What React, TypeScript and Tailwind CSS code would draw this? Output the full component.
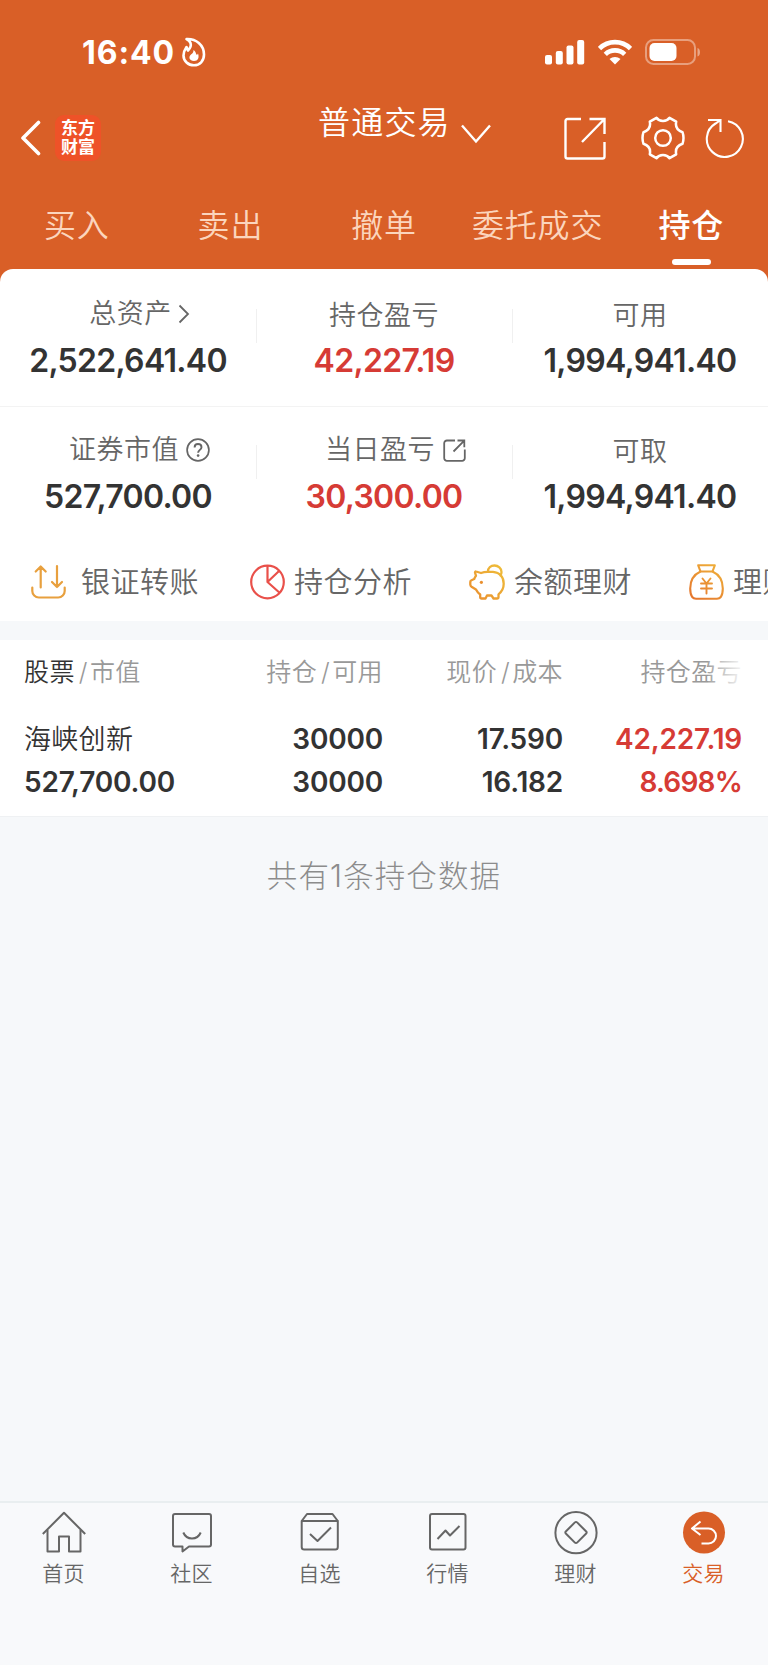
import type { ReactNode } from 'react';
import clsx from 'clsx';

interface Stat {
    label: string;
    value: string;
    icon?: ReactNode;
    red?: boolean;
}

interface QuickAction {
    label: string;
    icon: ReactNode;
    wide?: boolean;
}

const TABS = ['买入', '卖出', '撤单', '委托成交', '持仓'];

const ArrowRight = () => (
    <svg width="12" height="20" viewBox="0 0 12 20" className="ml-[6px]" fill="none" stroke="#666" strokeWidth="1.8">
        <path d="M1.5 1.5 10 10 1.5 18.5" />
    </svg>
);

const Help = () => (
    <svg width="24" height="24" viewBox="0 0 24 24" className="ml-[7px]" fill="none" stroke="#666" strokeWidth="1.7">
        <circle cx="12" cy="12" r="10.9" />
        <path d="M8.6 9.4C8.6 7.2 10 6 12 6s3.5 1.2 3.5 3.2c0 2.6-3.4 2.8-3.4 5.6" strokeWidth="1.9" />
        <circle cx="12.1" cy="17.6" r="1.3" fill="#666" stroke="none" />
    </svg>
);

const Share = () => (
    <svg width="23" height="23" viewBox="0 0 23 23" className="ml-[8px]" fill="none" stroke="#666" strokeWidth="1.8">
        <path d="M12 1.5H4A2.7 2.7 0 0 0 1.2 4.2V19A2.7 2.7 0 0 0 4 21.8H19A2.7 2.7 0 0 0 21.8 19V10.5" />
        <path d="M14.5 1.5H21.3V8.3M21 1.8 10.5 12.5" />
    </svg>
);

const STATS: Stat[][] = [
    [
        { label: '总资产', value: '2,522,641.40', icon: <ArrowRight /> },
        { label: '持仓盈亏', value: '42,227.19', red: true },
        { label: '可用', value: '1,994,941.40' },
    ],
    [
        { label: '证券市值', value: '527,700.00', icon: <Help /> },
        { label: '当日盈亏', value: '30,300.00', icon: <Share />, red: true },
        { label: '可取', value: '1,994,941.40' },
    ],
];

const ACTIONS: QuickAction[] = [
    {
        label: '银证转账',
        wide: true,
        icon: (
            <svg width="35" height="36" viewBox="0 0 35 36" fill="none" stroke="#e8a03e" strokeWidth="2.2" strokeLinecap="round" strokeLinejoin="round">
                <path d="M1.3 23.5V27a6.5 6.5 0 0 0 6.5 6.5H27.2A6.5 6.5 0 0 0 33.7 27V23.5" />
                <path d="M9.7 23.5V2.5M4.7 7.5l5-5 5 5M26 2V23M21 18l5 5 5-5" />
            </svg>
        ),
    },
    {
        label: '持仓分析',
        icon: (
            <svg width="35" height="36" viewBox="0 0 35 36" fill="none" stroke="#e9504a" strokeWidth="2.2" strokeLinejoin="round">
                <circle cx="17.5" cy="18" r="16.3" />
                <path d="M17.5 2V18L29.3 28.5M17.5 18 29.3 6.8" />
            </svg>
        ),
    },
    {
        label: '余额理财',
        icon: (
            <svg width="36" height="36" viewBox="0 0 36 36" fill="none" stroke="url(#pig)" strokeWidth="2.3" strokeLinejoin="round" strokeLinecap="round">
                <defs>
                    <linearGradient id="pig" x1="36" y1="0" x2="0" y2="36" gradientUnits="userSpaceOnUse">
                        <stop stopColor="#efc13a" />
                        <stop offset="1" stopColor="#e98a2e" />
                    </linearGradient>
                </defs>
                <path d="M7 7.5 12 9c2-.8 4-1.2 6.5-1.2H24c7 .6 10.7 5.5 10.7 12 0 4.8-2.2 8.2-5.2 10.5V33c0 .8-.7 1.5-1.5 1.5H24.5L22.5 31.5H18L16.5 34.5H12.7c-.8 0-1.5-.7-1.5-1.5V30.5C9.2 29 8 27.5 7 25.5L2.5 22.8C1.7 22.3 1.3 21.5 1.3 20.6V18c0-.8.5-1.5 1.2-1.8L5.2 15c.5-1.3 1-2.2 1.8-3.2L6 8.5c-.2-.6.4-1.2 1-1Z" />
                <path d="M19 7.5C19 4 21.8 1.5 25.5 1.5S32.5 4.5 32.5 8c0 1.4-.4 2.5-1 3.5" />
                <circle cx="12.4" cy="18.3" r="1.6" fill="#e98f2e" stroke="none" />
            </svg>
        ),
    },
    {
        label: '理财',
        icon: (
            <svg width="35" height="36" viewBox="0 0 35 36" fill="none" stroke="url(#bag)" strokeWidth="2.1" strokeLinejoin="round" strokeLinecap="round">
                <defs>
                    <linearGradient id="bag" x1="30" y1="0" x2="5" y2="36" gradientUnits="userSpaceOnUse">
                        <stop stopColor="#efb13a" />
                        <stop offset="1" stopColor="#e5752d" />
                    </linearGradient>
                </defs>
                <path d="M9.2 1.3H25.8L23.5 7.5H11.5L9.2 1.3Z" />
                <path d="M11.5 7.5C5 10.5 1.2 17 1.2 24.5c0 4 .6 6.5 2 8.5 1 1.3 2 1.7 3.8 1.7H28c1.8 0 2.8-.4 3.8-1.7 1.4-2 2-4.5 2-8.5 0-7.5-3.8-14-10.3-17" />
                <path d="M13.5 14.5 17.5 19.5 21.5 14.5M17.5 19.5V29.5M12 19.5H23M12 24.5H23" strokeWidth="1.9" />
            </svg>
        ),
    },
];

const NAV: { label: string; icon: ReactNode }[] = [
    {
        label: '首页',
        icon: (
            <>
                <path d="M.8 23 22 1.8 43.2 23" />
                <path d="M5.5 19V40.5H17V25.5H27V40.5H38.5V19" />
            </>
        ),
    },
    {
        label: '社区',
        icon: (
            <>
                <path d="M5 3H39a2 2 0 0 1 2 2V33.5a2 2 0 0 1-2 2H19L12.5 40.5V35.5H5a2 2 0 0 1-2-2V5a2 2 0 0 1 2-2Z" />
                <path d="M13.3 21.5c1.7 4 4.7 6 8.7 6s7-2 8.7-6" />
            </>
        ),
    },
    {
        label: '自选',
        icon: (
            <>
                <path d="M3.7 10V36a2.5 2.5 0 0 0 2.5 2.5H37.3A2.5 2.5 0 0 0 39.8 36V10Z" />
                <path d="M3.7 10 9 3H34.5L39.8 10M12 23 19.5 30 33 16.5" />
            </>
        ),
    },
    {
        label: '行情',
        icon: (
            <>
                <rect x="4" y="3" width="35.5" height="35.5" rx="2" />
                <path d="M11.5 28 19.5 19.5 24 24.5 33.5 15" />
            </>
        ),
    },
    {
        label: '理财',
        icon: (
            <>
                <circle cx="22" cy="21.7" r="20.6" />
                <path d="M20.9 11.4a1.5 1.5 0 0 1 2.2 0L32.2 20.5a1.5 1.5 0 0 1 0 2L23.1 31.6a1.5 1.5 0 0 1-2.2 0L11.8 22.5a1.5 1.5 0 0 1 0-2Z" />
            </>
        ),
    },
    {
        label: '交易',
        icon: (
            <>
                <circle cx="22" cy="21.5" r="21" fill="#d95f27" stroke="none" />
                <path d="M18.5 10.5 10 17.5 18.5 24M10.5 17.5H26.5a7.500 7.500 0 0 1 0 15H19.5" stroke="#fff" />
            </>
        ),
    },
];

function StatusBar() {
    return (
        <div className="flex h-[105px] items-center pl-[82px] pr-[67px] text-white">
            <span className="text-[32px] font-bold leading-none tracking-[0.9px]">16:40</span>
            <svg width="24" height="30" viewBox="0 0 24 30" className="-mt-[2px] ml-[7px]" fill="none" stroke="#fff" strokeWidth="2.6" strokeLinejoin="round">
                <path d="M4.5 2C14 1.5 22 8 22 17.5 22 24 17.8 28.3 12 28.3S1.5 24 1.5 18.5C1.5 15 2.8 12.5 4.5 10l1.5 3.5C8 11.5 9.5 9 8.5 6 7.8 4 6.5 3 4.5 2Z" />
                <path d="M11.5 13c3 2 2 4 3.5 5l1-1.5c1.5 4 0 7.5-4 7.5-4.5 0-6-4-3-6.5 2-1.5 2.5-2.5 2.5-4.5Z" fill="#fff" stroke="none" />
            </svg>
            <svg width="40" height="26" viewBox="0 0 40 26" className="-mt-px ml-auto" fill="#fff">
                <rect x="0" y="16" width="7" height="9.5" rx="2" />
                <rect x="10.8" y="12" width="7" height="13.5" rx="2" />
                <rect x="21.5" y="6.5" width="7" height="19" rx="2" />
                <rect x="32.2" y="1" width="7" height="24.5" rx="2" />
            </svg>
            <svg width="34" height="26" viewBox="0 0 34 26" className="-mt-px ml-[13px]" fill="none" stroke="#fff" strokeWidth="4.6">
                <path d="M1.5 9.5C10 1 24 1 32.5 9.5" />
                <path d="M7.3 15.3C12.6 10 21.4 10 26.7 15.3" />
                <path d="M17 25.5 11.5 20c3-2.8 8-2.8 11 0Z" fill="#fff" stroke="none" />
            </svg>
            <svg width="56" height="26" viewBox="0 0 56 26" className="-mt-px ml-[13px]">
                <rect x="1" y="1" width="49" height="24" rx="7.5" fill="none" stroke="#fff" strokeOpacity=".4" strokeWidth="2" />
                <rect x="4.5" y="4" width="27" height="18" rx="5" fill="#fff" />
                <path d="M52.5 9c3.3 1 3.3 7.5 0 8.5Z" fill="#fff" fillOpacity=".45" />
            </svg>
        </div>
    );
}

function TitleBar() {
    return (
        <div className="flex h-[67px] items-center pl-[20px] text-white">
            <svg width="21" height="36" viewBox="0 0 21 36" className="-mt-px" fill="none" stroke="#fff" strokeWidth="3.6" strokeLinecap="round" strokeLinejoin="round">
                <path d="M18.5 2.5 3 18 18.5 33.5" />
            </svg>
            <div className="-mt-[2px] ml-[14px] grid h-[46px] w-[46px] place-content-center rounded-[9px] bg-[#ee5228] text-center text-[17px] font-bold leading-[19px]">
                <span>东方</span>
                <span>财富</span>
            </div>
            <div className="ml-[217px] flex items-center">
                <span className="-mt-[31px] text-[32px] font-[350] leading-[40px] tracking-[1.2px]">普通交易</span>
                <svg width="30" height="20" viewBox="0 0 30 20" className="-mt-[9px] ml-[10px]" fill="none" stroke="#fff" strokeWidth="2.4">
                    <path d="M1 1.5 15 17.5 29 1.5" />
                </svg>
            </div>
            <svg width="42" height="43" viewBox="0 0 42 43" className="ml-[73px]" fill="none" stroke="#fff" strokeWidth="2.4">
                <path d="M17 2H3.5A2 2 0 0 0 1.5 4V39.5a2 2 0 0 0 2 2H38.5a2 2 0 0 0 2-2V25" />
                <path d="M25.5 2H40.5V17M40 2.5 18 25" />
            </svg>
            <svg width="44" height="44" viewBox="0 0 44 44" className="-mt-px ml-[35px]" fill="none" stroke="#fff" strokeWidth="2.5" strokeLinejoin="round">
                <path d="M15.5 1.8C17 4 19 5 22 5S27 4 28.5 1.8L35.2 5.7C34.2 10.5 36.5 14.5 41.5 16.2 42.8 20 42.8 24 41.5 27.8 36.5 29.500 34.2 33.500 35.2 38.300L28.500 42.200C27 40 25 39 22 39S17 40 15.500 42.200L8.800 38.300C9.800 33.500 7.500 29.500 2.500 27.800 1.200 24 1.200 20 2.500 16.200 7.500 14.500 9.800 10.500 8.800 5.700Z" />
                <circle cx="22" cy="22" r="7.8" />
            </svg>
            <svg width="40" height="40" viewBox="0 0 40 40" className="-mt-px ml-[20px]" fill="none" stroke="#fff" strokeWidth="2.1">
                <path d="M23 3.2A18 18 0 1 1 10.5 5.5L15.5 2M3 2H15.5V14" />
            </svg>
        </div>
    );
}

function StatCell({ label, value, icon, red }: Stat) {
    return (
        <div className="flex flex-col items-center">
            <div className={clsx('flex h-[34px] items-center', icon ? 'pl-[23px]' : 'translate-y-[2px]')}>
                <span className="text-[27px] font-[350] leading-[34px] tracking-[0.5px] text-[#666]">{label}</span>
                {icon}
            </div>
            <span className={clsx('mt-[10px] text-[32px] font-semibold leading-[40px] tracking-[-0.7px]', red ? 'text-[#d63b35]' : 'text-[#333]')}>{value}</span>
        </div>
    );
}

export default function App() {
    return (
        <div className="flex h-[1665px] w-[768px] flex-col overflow-hidden bg-[#f6f8fa] font-['Inter','Noto_Sans_CJK_SC',sans-serif]">
            <header className="h-[269px] shrink-0 bg-[#d95f27]">
                <StatusBar />
                <TitleBar />
                <nav className="grid h-[97px] grid-cols-5">
                    {TABS.map((tab) => (
                        <div key={tab} className={clsx('flex flex-col items-center whitespace-nowrap pt-[34px] text-[32px] leading-[40px] tracking-[0.8px]', tab === '持仓' ? 'font-medium text-white' : 'font-[350] text-[#fbd5bd]')}>
                            {tab}
                            {tab === '持仓' && <span className="mt-[13px] h-[6px] w-[39px] rounded-full bg-white" />}
                        </div>
                    ))}
                </nav>
            </header>

            <section className="h-[352px] shrink-0 bg-[#d95f27]">
                <div className="h-full overflow-hidden rounded-t-[13px] bg-white">
                    {STATS.map((row, i) => (
                        <div key={i} className={clsx('grid grid-cols-3', i === 0 ? 'h-[138px] border-b border-[#f3f3f3] pt-[28px]' : 'h-[133px] pt-[26px]')}>
                            {row.map((stat, j) => (
                                <div key={stat.label} className="relative">
                                    <StatCell {...stat} />
                                    {j > 0 && <span className="absolute left-0 top-[12px] h-[34px] w-px bg-[#f0f0f0]" />}
                                </div>
                            ))}
                        </div>
                    ))}
                    <div className="flex h-[84px] items-center pl-[31px]">
                        {ACTIONS.map(({ label, icon, wide }) => (
                            <div key={label} className={clsx('flex shrink-0 items-center', wide ? 'mr-[51px] gap-[15px]' : 'mr-[57px] gap-[9px]')}>
                                {icon}
                                <span className="mt-[2px] text-[29px] font-[350] leading-[36px] tracking-[0.5px] text-[#666]">{label}</span>
                            </div>
                        ))}
                    </div>
                </div>
            </section>

            <section className="mt-[19px] h-[177px] shrink-0 border-b border-[#eff1f3] bg-white pl-[24px] pr-[26px] pt-[16px]">
                <div className="grid grid-cols-[179px_180px_180px_179px] text-right text-[25px] font-[350] leading-[32px] tracking-[0.4px] text-[#999]">
                    <div className="text-left"><span className="text-[#333]">股票</span><Slash />市值</div>
                    <div>持仓<Slash />可用</div>
                    <div>现价<Slash />成本</div>
                    <div className="relative">
                        持仓盈亏
                        <span className="absolute right-0 top-0 h-full w-[34px] bg-linear-to-r from-white/10 to-white/90" />
                    </div>
                </div>
                <div className="mt-[30px] grid grid-cols-[179px_180px_180px_179px] text-right text-[28px] font-semibold leading-[43px] tracking-[-0.2px] text-[#333]">
                    <div className="text-left text-[27px] font-[350] tracking-[0.3px]">海峡创新</div>
                    <div>30000</div>
                    <div>17.590</div>
                    <div className="text-[#d63b35]">42,227.19</div>
                    <div className="text-left">527,700.00</div>
                    <div>30000</div>
                    <div>16.182</div>
                    <div className="tracking-[-0.8px] text-[#d63b35]">8.698%</div>
                </div>
            </section>

            <p className="mt-[39px] text-center text-[30.5px] font-light leading-[40px] tracking-[1.1px] text-[#8c8c8c]">共有1条持仓数据</p>

            <footer className="mt-auto grid h-[164px] shrink-0 grid-cols-6 border-t-2 border-[#e9eef0] bg-[#f8f9fb]">
                {NAV.map(({ label, icon }) => (
                    <div key={label} className={clsx('flex flex-col items-center pt-[8px]', label === '交易' ? 'text-[#d95f27]' : 'text-[#666]')}>
                        <svg width="44" height="44" viewBox="0 0 44 44" fill="none" stroke="currentColor" strokeWidth="2" strokeLinejoin="round">
                            {icon}
                        </svg>
                        <span className="mr-px mt-[5px] text-[21px] font-[350] leading-[28px] tracking-[0.3px]">{label}</span>
                    </div>
                ))}
            </footer>
        </div>
    );
}

function Slash() {
    return <span className="ml-[4px] mr-[2px]">/</span>;
}
